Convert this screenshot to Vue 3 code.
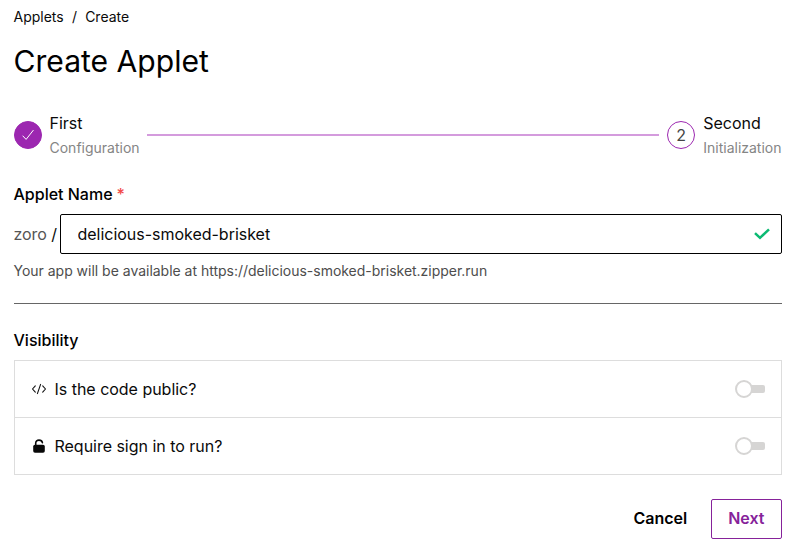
<script setup>
import { ref } from 'vue'

const name = ref('delicious-smoked-brisket')
const options = [
  { icon: 'code', label: 'Is the code public?' },
  { icon: 'unlock', label: 'Require sign in to run?' },
]
</script>

<template>
  <main class="page">
    <nav class="crumbs"><a>Applets</a><span>/</span><a>Create</a></nav>
    <h1>Create Applet</h1>

    <div class="stepper">
      <div class="step">
        <div class="dot done">
          <svg width="14" height="14" viewBox="0 0 14 14" fill="none" stroke="#fff" stroke-width="1" stroke-linecap="round" stroke-linejoin="round"><path d="M1.9 8 5.1 11.4 12.2 2.4" /></svg>
        </div>
        <div><div class="title">First</div><div class="desc">Configuration</div></div>
      </div>
      <div class="line"></div>
      <div class="step">
        <div class="dot">2</div>
        <div><div class="title">Second</div><div class="desc">Initialization</div></div>
      </div>
    </div>

    <label class="label">Applet Name<span class="req">*</span></label>
    <div class="field">
      <div class="prefix"><span>zoro</span> /</div>
      <div class="box">
        <input v-model="name" />
        <svg width="16" height="12" viewBox="0 0 16 12" fill="none" stroke="#0cba73" stroke-width="2.5"><path d="M1 5.2 6 9.9 15 1.3" /></svg>
      </div>
    </div>
    <p class="help">Your app will be available at https://{{ name }}.zipper.run</p>
    <div class="rule"></div>

    <div class="label">Visibility</div>
    <div class="options">
      <div v-for="o in options" :key="o.label" class="option">
        <svg v-if="o.icon === 'code'" width="16" height="16" viewBox="0 0 16 16" fill="none" stroke="#111" stroke-width="1.1" stroke-linecap="round" stroke-linejoin="round"><path d="M4.3 4.8 1.5 8 4.3 11.2M11.7 4.8 14.5 8 11.7 11.2M9.6 3.4 6.4 12.6" /></svg>
        <svg v-else width="16" height="16" viewBox="0 0 16 16" fill="none"><rect x="2.2" y="6.8" width="11.6" height="7.9" rx="1.8" fill="#080808" /><path d="M4.7 8V5.2C4.7 3.2 6.2 2.1 8 2.1S11.1 3.1 11.4 4.7" stroke="#080808" stroke-width="1.6" stroke-linecap="round" /></svg>
        <span class="text">{{ o.label }}</span>
        <span class="switch"><i class="knob"></i><i class="track"></i></span>
      </div>
    </div>

    <div class="actions">
      <button class="cancel">Cancel</button>
      <button class="next">Next</button>
    </div>
  </main>
</template>

<style>
body { background: #fff; }
</style>

<style scoped>
* { box-sizing: border-box; }
.page { width: 811px; height: 558px; padding: 6px 29.5px 0 13.5px; font: 400 16px/24px Inter, sans-serif; color: #0a0a0a; }
.crumbs { display: flex; gap: 8.2px; font-size: 14px; line-height: 21px; }
h1 { margin: 14px 0 0; font-size: 30.1px; line-height: 40px; font-weight: 400; color: #000; }
.stepper { display: flex; align-items: center; gap: 8px; height: 48px; margin-top: 30px; }
.step { display: flex; align-items: center; gap: 8px; }
.dot { display: flex; align-items: center; justify-content: center; width: 28px; height: 28px; border: 1px solid #9c27b0; border-radius: 50%; color: #444; }
.done { background: #9c27b0; }
.title { height: 24px; }
.desc { height: 24px; padding-top: 1px; font-size: 14px; color: #858585; }
.line { flex: 1; height: 2px; margin-left: -0.5px; background: #d49bdd; }
.label { display: block; font-weight: 500; margin-top: 23px; color: #000; }
.req { color: #f24848; margin-left: 4px; }
.field { display: flex; align-items: center; margin-top: 8px; }
.prefix { width: 46px; white-space: nowrap; letter-spacing: -0.08px; }
.prefix span { color: #555; }
.box { flex: 1; display: flex; align-items: center; height: 40px; padding: 0 11px 0 17px; border: 1px solid #000; border-radius: 2px; }
input { flex: 1; min-width: 0; padding: 0; border: 0; outline: 0; background: none; font: inherit; letter-spacing: -0.02px; color: #0a0a0a; }
.help { margin: 6px 0 0; font-size: 14px; line-height: 22px; letter-spacing: -0.015px; color: #4d4d4d; }
.rule { height: 1px; margin-top: 21px; background: #666; }
.rule + .label { margin-top: 24px; }
.options { margin-top: 8px; border: 1px solid #ddd; }
.option { display: flex; align-items: center; gap: 8px; height: 57px; padding: 0 16px; }
.option:first-child { border-bottom: 1px solid #ddd; }
.option:last-child { height: 56px; }
.text { flex: 1; letter-spacing: -0.02px; }
.switch { display: flex; align-items: center; width: 30px; }
.knob { width: 18px; height: 18px; border: 2px solid #d6d5d4; border-radius: 50%; }
.track { width: 14px; height: 8px; margin-left: -2px; background: #d6d5d4; border-radius: 0 2px 2px 0; }
.actions { display: flex; justify-content: flex-end; gap: 8px; margin-top: 24px; }
button { height: 40px; padding: 0 16px 2px; border: 0; background: none; font: 600 16px/24px Inter, sans-serif; color: #000; }
.next { border: 1px solid #86229a; border-radius: 2px; color: #86229a; }
</style>
